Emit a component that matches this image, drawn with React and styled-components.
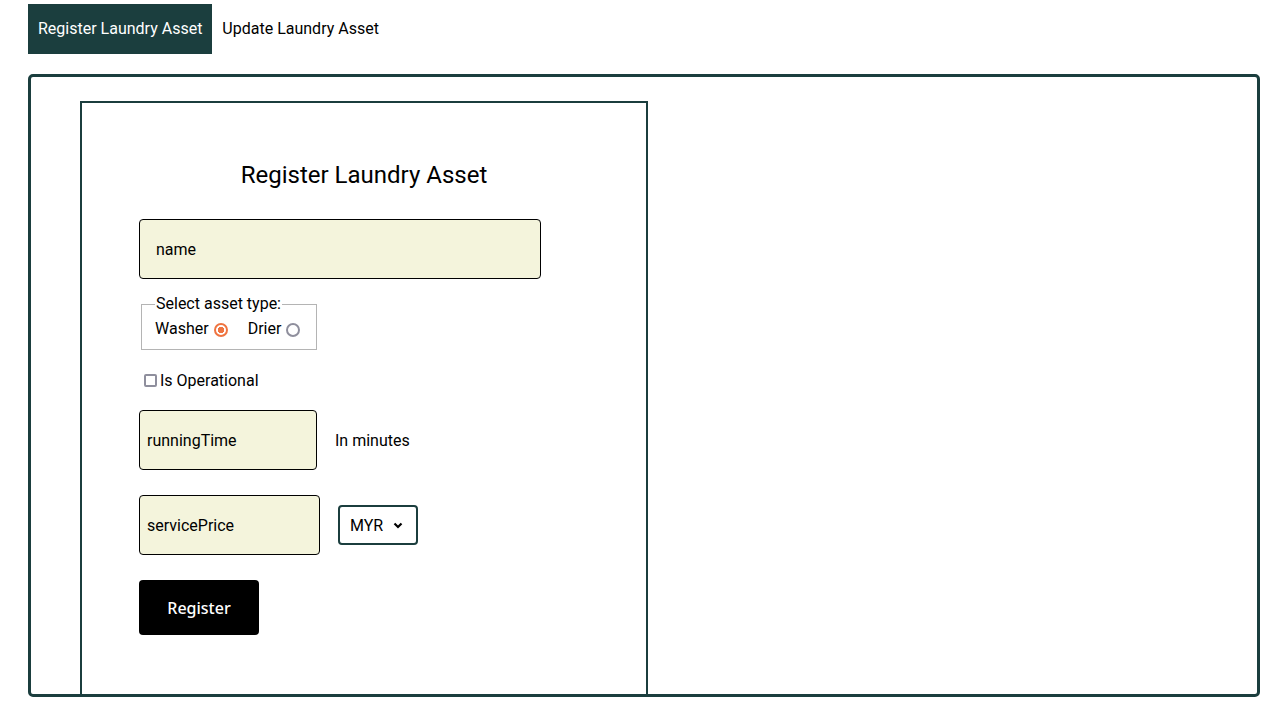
import styled, { createGlobalStyle } from "styled-components";

const GlobalStyle = createGlobalStyle`
  body {
    margin: 0;
    font-family: Roboto, "Liberation Sans", sans-serif;
    color: #000;
    background: #fff;
  }
`;

const Page = styled.div`
  padding: 4px 22px 0 28px;
`;

const TabBar = styled.nav`
  display: flex;
  height: 50px;
  margin-bottom: 20px;
`;

const Tab = styled.button`
  border: none;
  padding: 0 10px 2px;
  font: 400 16px Roboto, sans-serif;
  background: ${(p) => (p.$active ? "#1b3e3e" : "transparent")};
  color: ${(p) => (p.$active ? "#fff" : "#000")};
  cursor: pointer;
`;

const Frame = styled.section`
  box-sizing: border-box;
  height: 623px;
  border: 3px solid #1b3e3e;
  border-radius: 5px;
  padding: 24px 0 0 49px;
  overflow: hidden;
`;

const Card = styled.div`
  box-sizing: border-box;
  width: 568px;
  height: 700px;
  border: 2px solid #1b3e3e;
`;

const Title = styled.h2`
  margin: 58px 0 30px;
  text-align: center;
  font-size: 24px;
  font-weight: 400;
  line-height: 28px;
`;

const Form = styled.form`
  display: flex;
  flex-direction: column;
  align-items: flex-start;
  padding-left: 57px;
`;

const Input = styled.input`
  box-sizing: border-box;
  width: ${(p) => p.$w}px;
  height: 60px;
  padding: 0 ${(p) => p.$pad}px;
  background: #f4f4dc;
  border: 1px solid #000;
  border-radius: 4px;
  font: 400 16px Roboto, sans-serif;
  color: #000;
  &::placeholder {
    color: #000;
  }
`;

const TypeSet = styled.fieldset`
  margin: 17px 0 0 2px;
  padding: 7px 16px 10px 13px;
  border: 1px solid #b4b4b4;
  display: flex;
  align-items: center;
  font-size: 16px;
  line-height: 20px;
  legend {
    padding: 0 1px;
    margin-left: 0;
    line-height: 16px;
  }
`;

const RadioLabel = styled.label`
  display: flex;
  align-items: center;
  margin-right: ${(p) => p.$mr || 0}px;
`;

const Radio = styled.input.attrs({ type: "radio" })`
  appearance: none;
  box-sizing: border-box;
  width: 14px;
  height: 14px;
  margin: 1px 0 0 5px;
  border: 2px solid #8f8f9d;
  border-radius: 50%;
  background: #fff;
  &:checked {
    border-color: #ef7440;
    background: radial-gradient(circle, #ef7440 0 3px, #fff 3.5px);
  }
`;

const CheckRow = styled.label`
  display: flex;
  align-items: center;
  margin: 21px 0 20px 5px;
  font-size: 16px;
`;

const Checkbox = styled.input.attrs({ type: "checkbox" })`
  appearance: none;
  box-sizing: border-box;
  width: 13px;
  height: 13px;
  margin: 0 3px 0 0;
  border: 2px solid #8f8f9d;
  border-radius: 2px;
  background: #fff;
`;

const Row = styled.div`
  display: flex;
  align-items: center;
  gap: 18px;
  margin-bottom: 25px;
  font-size: 16px;
`;

const Currency = styled.select`
  appearance: none;
  box-sizing: border-box;
  width: 80px;
  height: 40px;
  padding: 0 8px 0 10px;
  border: 2px solid #1b3e3e;
  border-radius: 4px;
  background: #fff
    url("data:image/svg+xml,%3Csvg xmlns='http://www.w3.org/2000/svg' width='10' height='7' viewBox='0 0 10 7'%3E%3Cpath d='M1.5 1.5 5 5l3.5-3.5' fill='none' stroke='%23000' stroke-width='2.2'/%3E%3C/svg%3E")
    no-repeat right 13px center;
  font: 400 16px Roboto, sans-serif;
  color: #000;
`;

const Submit = styled.button`
  width: 120px;
  height: 55px;
  border: none;
  border-radius: 4px;
  background: #000;
  color: #fff;
  font: 500 16px "Noto Sans", sans-serif;
  cursor: pointer;
`;

export default function App() {
  return (
    <>
      <GlobalStyle />
      <Page>
        <TabBar>
          <Tab $active>Register Laundry Asset</Tab>
          <Tab>Update Laundry Asset</Tab>
        </TabBar>
        <Frame>
          <Card>
            <Title>Register Laundry Asset</Title>
            <Form onSubmit={(e) => e.preventDefault()}>
              <Input placeholder="name" $w={402} $pad={16} />
              <TypeSet>
                <legend>Select asset type:</legend>
                <RadioLabel $mr={20}>
                  Washer
                  <Radio name="assetType" defaultChecked />
                </RadioLabel>
                <RadioLabel>
                  Drier
                  <Radio name="assetType" />
                </RadioLabel>
              </TypeSet>
              <CheckRow>
                <Checkbox />
                Is Operational
              </CheckRow>
              <Row>
                <Input placeholder="runningTime" $w={178} $pad={7} />
                <span>In minutes</span>
              </Row>
              <Row>
                <Input placeholder="servicePrice" $w={181} $pad={7} />
                <Currency defaultValue="MYR">
                  <option>MYR</option>
                  <option>USD</option>
                </Currency>
              </Row>
              <Submit type="submit">Register</Submit>
            </Form>
          </Card>
        </Frame>
      </Page>
    </>
  );
}
